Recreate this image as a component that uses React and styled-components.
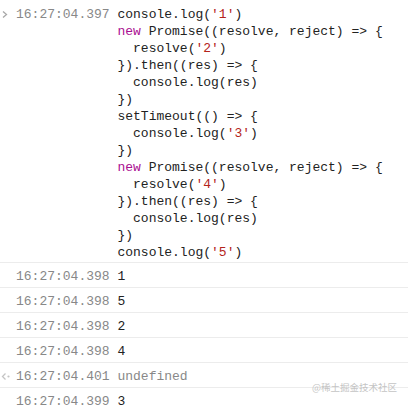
import React from 'react';
import styled, { createGlobalStyle } from 'styled-components';

const GlobalStyle = createGlobalStyle`
    html, body {
        margin: 0;
        padding: 0;
        background: #ffffff;
    }
    body {
        font-family: 'Liberation Mono', 'DejaVu Sans Mono', monospace;
        font-size: 13px;
        color: #222222;
        overflow: hidden;
    }
`;

const Console = styled.div`
    position: relative;
    width: 408px;
    height: 405px;
    overflow: hidden;
`;

const Row = styled.div`
    display: flex;
    align-items: flex-start;
    box-sizing: border-box;
    padding: ${(p) => (p.$input ? '6px 0 1px 0' : '5px 0 2px 0')};
    border-bottom: 1px solid #ececec;
    line-height: 17px;
`;

const Gutter = styled.span`
    width: 16px;
    height: 17px;
    flex: none;
    display: flex;
    align-items: center;
    justify-content: flex-start;
    padding-left: 1px;
    box-sizing: border-box;
`;

const Time = styled.span`
    color: #888888;
    white-space: pre;
    flex: none;
`;

const Message = styled.span`
    white-space: pre;
    color: ${(p) => (p.$muted ? '#888888' : '#222222')};
`;

const Keyword = styled.span`
    color: #aa0d91;
`;

const Str = styled.span`
    color: #b4231b;
`;

const Watermark = styled.div`
    position: absolute;
    right: 11px;
    bottom: 12px;
    font-family: 'Noto Sans CJK SC', 'Noto Sans', sans-serif;
    font-size: 9.5px;
    line-height: 12px;
    color: #c4c4c4;
`;

const Chevron = () => (
    <svg width='8' height='9' viewBox='0 0 8 9'>
        <path d='M2 1.5 L5.5 4.5 L2 7.5' fill='none' stroke='#a8a8a8' strokeWidth='1.3' />
    </svg>
);

const ResultIcon = () => (
    <svg width='10' height='9' viewBox='0 0 10 9'>
        <path d='M4.5 1.5 L1.5 4.5 L4.5 7.5' fill='none' stroke='#c4c4c4' strokeWidth='1.3' />
        <circle cx='7.5' cy='4.5' r='1.1' fill='#c4c4c4' />
    </svg>
);

const outputs = [
    { time: '16:27:04.398', text: '1' },
    { time: '16:27:04.398', text: '5' },
    { time: '16:27:04.398', text: '2' },
    { time: '16:27:04.398', text: '4' },
    { time: '16:27:04.401', text: 'undefined', result: true },
    { time: '16:27:04.399', text: '3' },
];

const App = () => {
    return (
        <Console>
            <Row $input>
                <Gutter>
                    <Chevron />
                </Gutter>
                <Time>16:27:04.397 </Time>
                <Message>
                    console.log(<Str>'1'</Str>){'\n'}
                    <Keyword>new</Keyword> Promise((resolve, reject) =&gt; {'{'}{'\n'}
                    {'  '}resolve(<Str>'2'</Str>){'\n'}
                    {'}'}).then((res) =&gt; {'{'}{'\n'}
                    {'  '}console.log(res){'\n'}
                    {'})'}{'\n'}
                    setTimeout(() =&gt; {'{'}{'\n'}
                    {'  '}console.log(<Str>'3'</Str>){'\n'}
                    {'})'}{'\n'}
                    <Keyword>new</Keyword> Promise((resolve, reject) =&gt; {'{'}{'\n'}
                    {'  '}resolve(<Str>'4'</Str>){'\n'}
                    {'}'}).then((res) =&gt; {'{'}{'\n'}
                    {'  '}console.log(res){'\n'}
                    {'})'}{'\n'}
                    console.log(<Str>'5'</Str>)
                </Message>
            </Row>
            {outputs.map((o, i) => (
                <Row key={i}>
                    <Gutter>{o.result && <ResultIcon />}</Gutter>
                    <Time>{o.time} </Time>
                    <Message $muted={o.result}>{o.text}</Message>
                </Row>
            ))}
            <Watermark>@稀土掘金技术社区</Watermark>
            <GlobalStyle />
        </Console>
    );
};

export default App;
